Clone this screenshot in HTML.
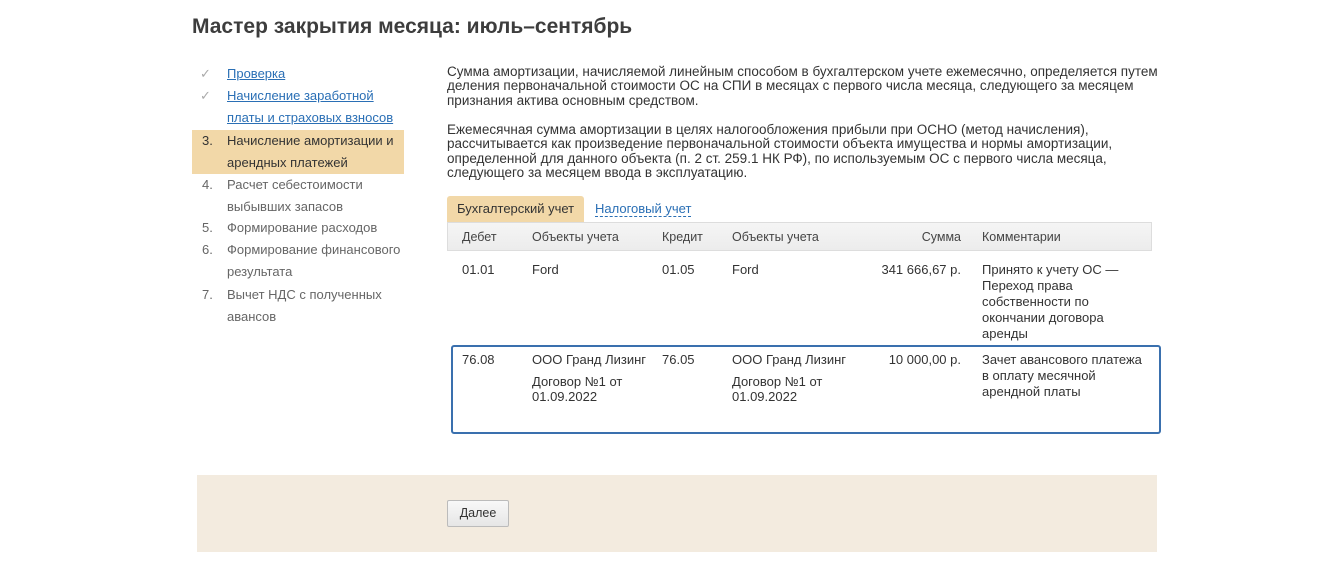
<!DOCTYPE html>
<html><head><meta charset="utf-8"><style>
*{margin:0;padding:0;box-sizing:border-box}
body{width:1317px;height:564px;background:#fff;font-family:"Liberation Sans",Arial,sans-serif;color:#333;position:relative;overflow:hidden}
.a{position:absolute;white-space:nowrap}
h1{position:absolute;left:192px;top:15px;font-size:21px;font-weight:bold;color:#3d3d3d}
.nav{font-size:13px;line-height:22px}
.nav a{color:#2a6fb5;text-decoration:underline}
.g{color:#666}
.p{font-size:13.5px;line-height:14.3px;color:#333;left:447px;width:760px;white-space:normal}
.t{font-size:13px;color:#333}
.h{font-size:12.5px;color:#444}
.r{text-align:right}
</style></head><body>
<h1>Мастер закрытия месяца: июль–сентябрь</h1>

<div class="a" style="left:192px;top:130px;width:212px;height:44px;background:#f2d8a8"></div>
<div class="a nav" style="left:200px;top:63px;color:#aaa">✓</div>
<div class="a nav" style="left:227px;top:63px"><a>Проверка</a></div>
<div class="a nav" style="left:200px;top:85px;color:#aaa">✓</div>
<div class="a nav" style="left:227px;top:85px"><a>Начисление заработной</a><br><a>платы и страховых взносов</a></div>
<div class="a nav" style="left:202px;top:130px;color:#333">3.</div>
<div class="a nav" style="left:227px;top:130px;color:#333">Начисление амортизации и<br>арендных платежей</div>
<div class="a nav g" style="left:202px;top:174px">4.</div>
<div class="a nav g" style="left:227px;top:174px">Расчет себестоимости<br>выбывших запасов</div>
<div class="a nav g" style="left:202px;top:217px">5.</div>
<div class="a nav g" style="left:227px;top:217px">Формирование расходов</div>
<div class="a nav g" style="left:202px;top:239px">6.</div>
<div class="a nav g" style="left:227px;top:239px">Формирование финансового<br>результата</div>
<div class="a nav g" style="left:202px;top:284px">7.</div>
<div class="a nav g" style="left:227px;top:284px">Вычет НДС с полученных<br>авансов</div>

<div class="a p" style="top:65px">Сумма амортизации, начисляемой линейным способом в бухгалтерском учете ежемесячно, определяется путем<br>деления первоначальной стоимости ОС на СПИ в месяцах с первого числа месяца, следующего за месяцем<br>признания актива основным средством.</div>
<div class="a p" style="top:123px">Ежемесячная сумма амортизации в целях налогообложения прибыли при ОСНО (метод начисления),<br>рассчитывается как произведение первоначальной стоимости объекта имущества и нормы амортизации,<br>определенной для данного объекта (п. 2 ст. 259.1 НК РФ), по используемым ОС с первого числа месяца,<br>следующего за месяцем ввода в эксплуатацию.</div>

<div class="a" style="left:447px;top:196px;width:137px;height:27px;background:#f2d8a8;border-radius:3px 3px 0 0"></div>
<div class="a t" style="left:457px;top:201px;color:#333">Бухгалтерский учет</div>
<div class="a t" style="left:595px;top:201px;color:#2a6fb5;border-bottom:1px dashed #2a6fb5;line-height:15px">Налоговый учет</div>
<div class="a" style="left:447px;top:222px;width:705px;height:29px;background:linear-gradient(#f5f5f5,#ececec);border:1px solid #ddd"></div>
<div class="a h" style="left:462px;top:230px">Дебет</div>
<div class="a h" style="left:532px;top:230px">Объекты учета</div>
<div class="a h" style="left:662px;top:230px">Кредит</div>
<div class="a h" style="left:732px;top:230px">Объекты учета</div>
<div class="a h r" style="left:861px;width:100px;top:230px">Сумма</div>
<div class="a h" style="left:982px;top:230px">Комментарии</div>

<div class="a t" style="left:462px;top:262px">01.01</div>
<div class="a t" style="left:532px;top:262px">Ford</div>
<div class="a t" style="left:662px;top:262px">01.05</div>
<div class="a t" style="left:732px;top:262px">Ford</div>
<div class="a t r" style="left:841px;width:120px;top:262px">341 666,67 р.</div>
<div class="a t" style="left:982px;top:262px;line-height:16px">Принято к учету ОС —<br>Переход права<br>собственности по<br>окончании договора<br>аренды</div>

<div class="a" style="left:451px;top:345px;width:710px;height:89px;border:2px solid #3a70ae;border-radius:3px"></div>
<div class="a t" style="left:462px;top:352px">76.08</div>
<div class="a t" style="left:532px;top:352px">ООО Гранд Лизинг</div>
<div class="a t" style="left:532px;top:374px">Договор №1 от</div>
<div class="a t" style="left:532px;top:389px">01.09.2022</div>
<div class="a t" style="left:662px;top:352px">76.05</div>
<div class="a t" style="left:732px;top:352px">ООО Гранд Лизинг</div>
<div class="a t" style="left:732px;top:374px">Договор №1 от</div>
<div class="a t" style="left:732px;top:389px">01.09.2022</div>
<div class="a t r" style="left:841px;width:120px;top:352px">10 000,00 р.</div>
<div class="a t" style="left:982px;top:352px;line-height:16px">Зачет авансового платежа<br>в оплату месячной<br>арендной платы</div>

<div class="a" style="left:197px;top:475px;width:960px;height:77px;background:#f3ebdf"></div>
<div class="a" style="left:447px;top:500px;width:62px;height:27px;border:1px solid #bbb;border-radius:2px;background:linear-gradient(#f8f8f8,#e6e6e6);font-size:12.5px;text-align:center;line-height:25px;color:#333">Далее</div>
</body></html>
